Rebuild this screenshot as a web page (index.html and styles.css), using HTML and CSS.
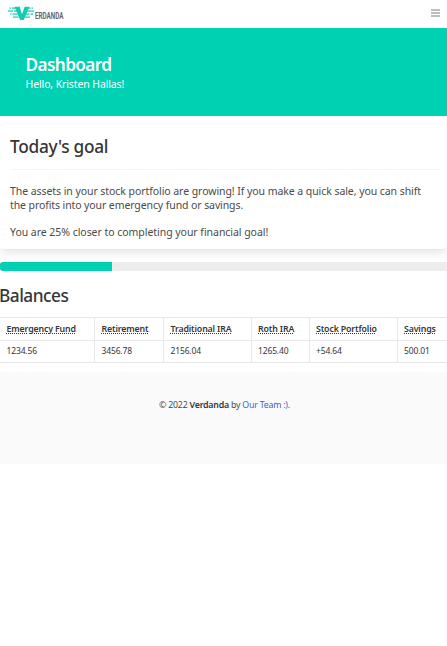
FILE: index.html
```html
<!DOCTYPE html>
<html lang="en">
<head>
<meta charset="utf-8">
<meta name="viewport" content="width=device-width">
<title>Verdanda</title>
<link rel="stylesheet" href="styles.css">
</head>
<body>
<nav class="navbar">
  <a class="brand" aria-label="Verdanda">
    <svg class="mark" width="27" height="16" viewBox="0 0 27 16" fill="none" stroke="#12cdb4">
      <path d="M6.500 1.800h5.200l2.300 7.400 2.600-7.400h4.800L15.800 15h-3.600z" fill="#12cdb4" stroke="none"/>
      <path d="M1.500 3.200h1.500M4 3.200h3.500M0 6.200h5M6 6.200h3M2 9.200h1.500M4.500 9.200h5M5 12.200h5.500M19.500 3.200h3M23.500 3.200h1.500M18.500 6.200h7.500M17.500 9.200h4M22.500 9.200h2.500M16.500 12.200h5.500" stroke-width="1.800" opacity=".7"/>
    </svg>
    <span class="wordmark">ERDANDA</span>
  </a>
  <div class="burger"><i></i><i></i><i></i></div>
</nav>
<header class="hero">
  <h1>Dashboard</h1>
  <p>Hello, Kristen Hallas!</p>
</header>
<section class="card">
  <h2>Today's goal</h2>
  <hr>
  <p class="l1">The assets in your stock portfolio are growing! If you make a quick sale, you can shift<br><span class="l2">the profits into your emergency fund or savings.</span></p>
  <p class="l3">You are 25% closer to completing your financial goal!</p>
</section>
<div class="progress"><div class="bar"></div></div>
<h2 class="balances">Balances</h2>
<table>
  <colgroup><col class="c1"><col class="c2"><col class="c3"><col class="c4"><col class="c5"><col class="c6"></colgroup>
  <thead><tr><th><abbr>Emergency Fund</abbr></th><th><abbr>Retirement</abbr></th><th><abbr>Traditional IRA</abbr></th><th><abbr>Roth IRA</abbr></th><th><abbr>Stock Portfolio</abbr></th><th><abbr>Savings</abbr></th></tr></thead>
  <tbody><tr><td>1234.56</td><td>3456.78</td><td>2156.04</td><td>1265.40</td><td>+54.64</td><td>500.01</td></tr></tbody>
</table>
<footer><p>© 2022 <strong>Verdanda</strong> by <a>Our Team :)</a>.</p></footer>
</body>
</html>
```
FILE: styles.css
```css
* { box-sizing: border-box; }
html { overflow: hidden; }
body, h1, h2, p { margin: 0; }
body { background: #fff; color: #4a4a4a; font-family: "Noto Sans", sans-serif; font-size: 10.5px; }
.navbar { height: 28px; display: flex; justify-content: space-between; padding: 0 7px 0 8px; }
.brand { display: flex; padding-top: 5px; }
.wordmark { font: bold 9px/10px Roboto, sans-serif; color: #666; margin-top: 6px; transform: scaleX(.7); transform-origin: left; }
.burger { width: 9px; padding-top: 9px; display: flex; flex-direction: column; gap: 1px; }
.burger i { height: 2px; background: #bdbdbd; }
.hero { height: 88px; background: #00d1b2; color: #fff; padding: 25px 26px 0 25.5px; }
.hero h1 { font-size: 17.2px; line-height: 24px; font-weight: 600; letter-spacing: -.6px; }
.hero p { line-height: 14px; letter-spacing: -.12px; }
h2 { color: #363636; font-size: 17.3px; line-height: 24px; font-weight: 500; letter-spacing: -.3px; }
.card { height: 125px; margin-top: 8px; padding: 11px 7px 0 10px; border-radius: 4px; box-shadow: 0 5px 10px -1px rgba(10,10,10,.1), 0 0 0 1px rgba(10,10,10,.02); white-space: nowrap; }
.card hr { height: 1px; border: 0; background: #f5f5f5; margin: 10px 0 14px; }
.card p { line-height: 14px; letter-spacing: -.065px; }
.card .l2 { letter-spacing: -.1px; }
.card .l3 { margin-top: 13px; letter-spacing: -.04px; }
.progress { height: 9px; margin-top: 13px; background: #ededed; border-radius: 3px 0 0 3px; overflow: hidden; }
.bar { width: 25%; height: 100%; background: #00d1b2; }
.balances { margin: 13px 0 0 -1px; letter-spacing: -.5px; }
table { width: 458px; margin: 9px 0 0 -1px; table-layout: fixed; border-collapse: collapse; font-size: 8.5px; line-height: 12px; letter-spacing: -.15px; color: #363636; }
.c1 { width: 95px; } .c2 { width: 69px; } .c3 { width: 87.5px; } .c4 { width: 58px; } .c5 { width: 88px; } .c6 { width: 60.5px; }
th, td { height: 22.5px; padding: 0 6.5px; border: 1px solid #e8e8e8; text-align: left; white-space: nowrap; }
th { font-weight: 600; font-size: 8.8px; }
abbr { text-decoration: underline dotted; }
footer { height: 92px; margin-top: 9px; padding: 27px 0 0 2px; background: #fafafa; text-align: center; font-size: 8.8px; line-height: 13px; letter-spacing: -.22px; }
footer strong { color: #363636; font-weight: 600; }
footer a { color: #485fc7; }
```
